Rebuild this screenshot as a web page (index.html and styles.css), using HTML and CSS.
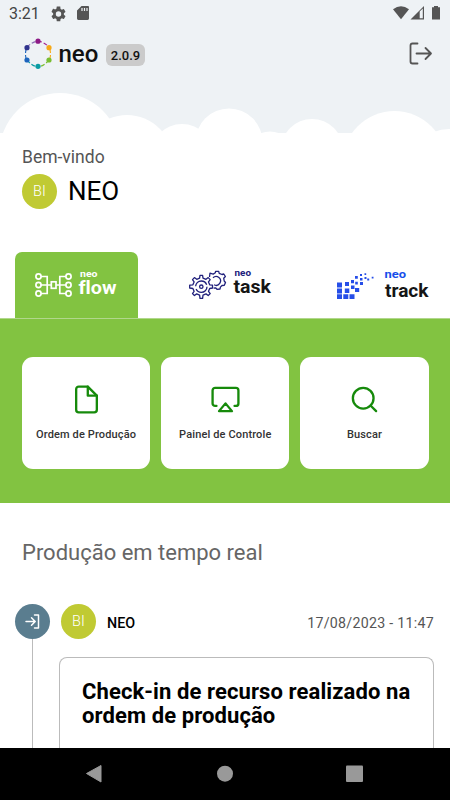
FILE: index.html
```html
<!DOCTYPE html>
<html lang="pt-BR">

<head>
  <meta charset="UTF-8">
  <meta name="viewport" content="width=device-width, initial-scale=1.0">
  <title>neo</title>
  <link rel="stylesheet" href="styles.css">
</head>

<body>
  <div class="screen">
    <header class="top">
      <div class="status">
        <span class="time">3:21</span>
        <svg class="status-gear" width="16" height="16" viewBox="2 2 20 20" fill="#555">
          <path d="M19.14 12.94c.04-.3.06-.61.06-.94s-.02-.64-.07-.94l2.03-1.58a.49.49 0 0 0 .12-.61l-1.92-3.32a.49.49 0 0 0-.59-.22l-2.39.96a7 7 0 0 0-1.62-.94l-.36-2.54A.48.48 0 0 0 13.92 2h-3.84c-.24 0-.43.17-.47.41l-.36 2.54c-.59.24-1.13.57-1.62.94l-2.39-.96a.48.48 0 0 0-.59.22L2.74 8.87a.48.48 0 0 0 .12.61l2.03 1.58a6 6 0 0 0 0 1.88l-2.03 1.58a.49.49 0 0 0-.12.61l1.92 3.32c.12.22.37.29.59.22l2.39-.96c.5.38 1.03.7 1.62.94l.36 2.54c.05.24.24.41.48.41h3.84c.24 0 .44-.17.47-.41l.36-2.54a6.800 6.800 0 0 0 1.62-.94l2.39.96c.22.08.47 0 .59-.22l1.92-3.32a.48.48 0 0 0-.12-.61zM12 15.600a3.600 3.600 0 1 1 0-7.200 3.600 3.600 0 0 1 0 7.200z"/>
        </svg>
        <svg class="status-card" width="12" height="14" viewBox="0 0 12 14">
          <path d="M4.500 0H10.500A1.300 1.300 0 0 1 12 1.400V12.600A1.400 1.400 0 0 1 10.600 14H1.400A1.400 1.400 0 0 1 0 12.600V4.500z" fill="#555"/>
          <path d="M5 2v3M7.500 2v3M10 2v3" stroke="#eef2f5" stroke-width="1.200"/>
        </svg>
        <span class="spacer"></span>
        <svg width="49" height="15" viewBox="0 0 49 15" fill="#555">
          <path d="M0 3.300Q8 -2.600 16 3.300L8 13.200z"/>
          <path d="M17.500 13.500L31 0V13.500z"/>
          <path d="M26.700 5.500L29.800 2.500V12.300H26.700z" fill="#eef2f5"/>
          <path d="M41 1.200V0h4v1.200h2v12.300h-8V1.200z"/>
        </svg>
      </div>
      <div class="brand">
        <svg width="28" height="32" viewBox="0 0 28 32">
          <g fill="none" stroke-width="1.100" stroke-dasharray="4 2">
            <path d="M14 3Q20 4 25 9" stroke="#a3238e"/>
            <path d="M25.800 11Q27.200 16 25.800 21" stroke="#f7a916"/>
            <path d="M25 22Q20 28 14 29" stroke="#79bd31"/>
            <path d="M3 22Q8 28 14 29" stroke="#0a9ca3"/>
            <path d="M2.200 11Q.8 16 2.200 21" stroke="#1c65bd"/>
            <path d="M3 9Q8 4 14 3" stroke="#8b6db5"/>
          </g>
          <circle cx="14" cy="3.200" r="2.600" fill="#8c1a86"/>
          <circle cx="25" cy="9.700" r="2.600" fill="#f7a916"/>
          <circle cx="25" cy="22" r="2.600" fill="#79bd31"/>
          <circle cx="14" cy="28.300" r="2.600" fill="#0a9ca3"/>
          <circle cx="3" cy="22" r="2.600" fill="#1c65bd"/>
          <circle cx="3" cy="9.700" r="2.600" fill="#2f338d"/>
        </svg>
        <span class="brand-name">neo</span>
        <span class="version">2.0.9</span>
        <span class="spacer"></span>
        <svg class="logout" width="24" height="24" viewBox="0 0 24 24" fill="none" stroke="#555" stroke-width="1.800" stroke-linecap="round" stroke-linejoin="round">
          <path d="M8.500 1.500H3.500Q1.500 1.500 1.500 3.500V19.500Q1.500 21.500 3.500 21.500H8.500M7.500 11.500H22M16.500 6l5.500 5.500-5.500 5.500"/>
        </svg>
      </div>
      <svg class="clouds" width="450" height="41" viewBox="0 92 450 41" fill="#fff">
        <circle cx="60" cy="153.600" r="60.600"/>
        <circle cx="127" cy="161" r="46"/>
        <circle cx="182" cy="156" r="32"/>
        <circle cx="229" cy="142" r="33.500"/>
        <circle cx="270" cy="157" r="25.500"/>
        <circle cx="312" cy="150" r="31"/>
        <circle cx="394.500" cy="163" r="52"/>
        <circle cx="449" cy="169" r="40"/>
      </svg>
    </header>

    <section class="welcome">
      <p class="greeting">Bem-vindo</p>
      <div class="user">
        <span class="avatar">BI</span>
        <span class="user-name">NEO</span>
      </div>
    </section>

    <nav class="tabs">
      <a class="tab active">
        <svg width="123" height="66" viewBox="15 252 123 66">
          <g fill="none" stroke="#fff" stroke-width="1.700">
            <circle cx="38.500" cy="276.500" r="2.600"/>
            <circle cx="38.500" cy="285" r="2.600"/>
            <circle cx="38.500" cy="293.500" r="2.600"/>
            <circle cx="68.500" cy="276.500" r="2.600"/>
            <circle cx="68.500" cy="285" r="2.600"/>
            <circle cx="68.500" cy="293.500" r="2.600"/>
            <path d="M41 276.500h6.200v17H41M41 285h10M66 276.500h-6.200v17H66M66 285h-10"/>
            <rect x="51.300" y="281.800" width="4.700" height="6.500"/>
          </g>
          <text class="logo-small" x="80" y="277" textLength="17.500" lengthAdjust="spacingAndGlyphs" fill="#fff">neo</text>
          <text class="logo-big" x="78.500" y="294" textLength="38" lengthAdjust="spacingAndGlyphs" fill="#fff">flow</text>
        </svg>
      </a>
      <a class="tab">
        <svg width="123" height="66" viewBox="169 252 123 66">
          <g fill="none" stroke="#20207c" stroke-width="1.300" stroke-linejoin="round">
            <path d="M199.600 278.100L200 275.300H202.600L203 278.100L206 279.300L208.200 277.600L210.200 279.600L208.500 281.900L209.700 284.800L212.500 285.200V288L209.700 288.500L208.500 291.300L210.200 293.600L208.200 295.500L206 293.900L203 295.100L202.600 298.300H200L199.600 295.100L196.700 293.900L194.400 295.500L192.500 293.600L194.100 291.300L192.900 288.500L189.700 288V285.200L192.900 284.800L194.100 281.900L192.500 279.600L194.400 277.600L196.700 279.300z"/>
            <circle cx="201.300" cy="286.700" r="5.700" stroke-dasharray="15 2.900"/>
            <circle cx="201.300" cy="286.700" r="1.700"/>
            <path d="M209.500 277L210 273.200L213.200 274.100L215.300 272.800L215.600 271.300H218.700L219.200 273.300L222 274.500L223.800 274L225.400 276.500L223.700 278.200L224.200 281L225.500 282.500L224.300 285.300L222 285.500L220.400 287.100L220 289L217 289.300L215.500 287.800L213.500 288.200"/>
            <path d="M213 277.800A4.400 4.400 0 1 1 214 284.800"/>
          </g>
          <text class="logo-small" x="234.500" y="276" textLength="16.500" lengthAdjust="spacingAndGlyphs" fill="#20207c">neo</text>
          <text class="logo-big" x="233.500" y="293" textLength="37.500" lengthAdjust="spacingAndGlyphs" fill="#151515">task</text>
        </svg>
      </a>
      <a class="tab">
        <svg width="123" height="66" viewBox="322 252 123 66">
          <g fill="#264ee8">
            <path d="M337 282.500h5v5h-5zM337 288.500h5v5h-5zM337 294.200h5v4.800h-5zM343.300 294.200h5v4.800h-5zM349.500 294.200h5v4.800h-5zM344.800 288.500h4.500v4.500h-4.500zM345 282h4v4h-4zM351 280h3v3.200h-3zM351 285.500h3.500v3.600h-3.500zM355 288h4.200v4h-4.200zM355 276h2.800v2.800h-2.800zM355.200 281.800h2.600v2.700h-2.600zM360 282h3v3h-3zM360 278h2.500v2.500h-2.500zM360 274h2v2h-2zM364.500 273.200h1.700v1.700h-1.700zM364.500 277h2v2h-2zM367.200 278.500h2v2h-2zM371.700 276.700h1.800v1.800h-1.800z"/>
          </g>
          <text class="logo-small track" x="384.500" y="277.500" textLength="21.500" lengthAdjust="spacingAndGlyphs" fill="#164eea">neo</text>
          <text class="logo-big" x="385" y="297" textLength="43.500" lengthAdjust="spacingAndGlyphs" fill="#151515">track</text>
        </svg>
      </a>
    </nav>

    <section class="actions">
      <a class="action">
        <svg class="icon" viewBox="0 0 24 24">
          <path d="M13 2H6a2 2 0 0 0-2 2v16a2 2 0 0 0 2 2h12a2 2 0 0 0 2-2V9z"/>
          <path d="M13 2v7h7"/>
        </svg>
        <span>Ordem de Produção</span>
      </a>
      <a class="action">
        <svg class="icon" viewBox="0 0 24 24">
          <path d="M5 17H4a2 2 0 0 1-2-2V5a2 2 0 0 1 2-2h16a2 2 0 0 1 2 2v10a2 2 0 0 1-2 2h-1"/>
          <path d="M12 15l5 6H7z"/>
        </svg>
        <span>Painel de Controle</span>
      </a>
      <a class="action">
        <svg class="icon" viewBox="0 0 24 24">
          <circle cx="11" cy="11" r="8"/>
          <path d="M21 21l-4.350-4.350"/>
        </svg>
        <span>Buscar</span>
      </a>
    </section>

    <section class="feed">
      <h2>Produção em tempo real</h2>
      <article class="event">
        <div class="rail">
          <span class="rail-icon">
            <svg width="17" height="17" viewBox="0 0 17 17" fill="none" stroke="#fff" stroke-width="1.500" stroke-linecap="round" stroke-linejoin="round">
              <path d="M10.500 2H14.500V15H10.500M2 8.500H11M7.500 4.800l3.700 3.700-3.700 3.700"/>
            </svg>
          </span>
        </div>
        <div class="event-body">
          <div class="event-head">
            <span class="avatar">BI</span>
            <strong>NEO</strong>
            <time>17/08/2023 - 11:47</time>
          </div>
          <div class="event-card">
            <h3>Check-in de recurso realizado na ordem de produção</h3>
          </div>
        </div>
      </article>
    </section>

    <footer class="navbar">
      <svg width="450" height="52" viewBox="0 748 450 52" fill="#999">
        <path d="M86.500 773.500L101 765.500V782z" stroke="#999" stroke-linejoin="round"/>
        <circle cx="225" cy="773.700" r="8"/>
        <rect x="346" y="765.500" width="17" height="16.500" rx="1"/>
      </svg>
    </footer>
  </div>
</body>

</html>
```
FILE: styles.css
```css
* {
  box-sizing: border-box;
}

body {
  margin: 0;
  background: #fff;
  font-family: Roboto, "Liberation Sans", sans-serif;
}

h2, h3, p {
  margin: 0;
}

svg {
  display: block;
  flex-shrink: 0;
}

.screen {
  display: flex;
  flex-direction: column;
  width: 450px;
  height: 800px;
  overflow: hidden;
}

.spacer {
  flex: 1;
}

/* header */
.top {
  display: flex;
  flex-direction: column;
  height: 133px;
  background: #eef2f5;
}

.status {
  display: flex;
  align-items: center;
  height: 27px;
  padding: 0 8px 0 9px;
}

.time {
  width: 42px;
  color: #444;
  font-size: 16px;
  line-height: 27px;
}

.status-gear {
  width: 15px;
}

.status-card {
  margin: -2px 0 0 11px;
}

.brand {
  display: flex;
  align-items: center;
  height: 54px;
  padding: 0 17px 0 24px;
}

.brand-name {
  width: 48px;
  padding-left: 6.5px;
  color: #111;
  font-size: 24px;
  font-weight: 500;
  line-height: 28px;
}

.version {
  width: 39px;
  height: 22px;
  margin: 2px 0 0 6px;
  border-radius: 6px;
  background: #cbcbcb;
  color: #111;
  font-size: 13px;
  font-weight: 500;
  line-height: 23px;
  text-align: center;
}

.clouds {
  margin-top: auto;
}

/* greeting */
.welcome {
  height: 119px;
  padding: 13px 22px 0;
}

.greeting {
  color: #555;
  font-size: 17.5px;
  line-height: 22px;
}

.user {
  display: flex;
  align-items: center;
  gap: 11px;
  margin-top: 5px;
}

.avatar {
  width: 35px;
  height: 35px;
  border-radius: 50%;
  background: #c0ca33;
  color: #fff;
  font-size: 14.5px;
  font-weight: 300;
  line-height: 35px;
  text-align: center;
}

.user-name {
  color: #000;
  font-size: 26px;
  line-height: 37px;
}

/* product tabs */
.tabs {
  display: flex;
  justify-content: space-between;
  height: 66px;
  padding: 0 5px 0 15px;
}

.tab.active {
  border-radius: 7px 7px 0 0;
  background: #82c341;
}

.logo-small {
  font: 700 9px Roboto, sans-serif;
}

.logo-small.track {
  font-size: 11px;
}

.logo-big {
  font: 700 19px Roboto, sans-serif;
  font-variant-ligatures: none;
}

/* shortcuts */
.actions {
  display: flex;
  gap: 11px;
  height: 185px;
  padding: 37.5px 21.500px 34px 22px;
  border-top: 1px solid #b1d78c;
  background: #82c341;
}

.action {
  display: flex;
  flex: 1;
  flex-direction: column;
  align-items: center;
  gap: 12px;
  height: 112.5px;
  padding-top: 27.5px;
  border-radius: 11px;
  background: #fff;
  color: #333;
  font-size: 11px;
  font-weight: 500;
  letter-spacing: .13px;
  line-height: 16px;
  white-space: nowrap;
}

.icon {
  width: 31px;
  height: 31px;
  fill: none;
  stroke: #168a0b;
  stroke-width: 1.8;
  stroke-linecap: round;
  stroke-linejoin: round;
}

/* live feed */
.feed {
  display: flex;
  flex: 1;
  flex-direction: column;
  min-height: 0;
  padding: 35px 16px 0 15px;
  overflow: hidden;
}

.feed h2 {
  padding-left: 7px;
  color: #666;
  font-size: 22px;
  font-weight: 400;
  line-height: 30px;
}

.event {
  display: flex;
  flex: 1;
  gap: 9px;
  margin-top: 36px;
}

.rail {
  width: 35px;
  background: linear-gradient(#bbb, #bbb) 17px 0 / 1px 100% no-repeat;
}

.rail-icon {
  display: flex;
  align-items: center;
  justify-content: center;
  width: 35px;
  height: 35px;
  border-radius: 50%;
  background: #5a7d8f;
}

.event-body {
  display: flex;
  flex: 1;
  flex-direction: column;
}

.event-head {
  display: flex;
  align-items: center;
  padding-left: 2px;
}

.event-head strong {
  margin-left: 11px;
  padding-top: 2px;
  font-size: 14.3px;
  font-weight: 500;
}

.event-head time {
  margin-left: auto;
  padding-top: 2px;
  color: #555;
  font-size: 14.2px;
  letter-spacing: .28px;
}

.event-card {
  flex: 1;
  margin-top: 18px;
  padding: 21.5px 20px 0 22px;
  border: 1px solid #bbb;
  border-bottom: 0;
  border-radius: 8px 8px 0 0;
}

.event-card h3 {
  color: #000;
  font-size: 22px;
  font-weight: 700;
  letter-spacing: .1px;
  line-height: 24.5px;
}

/* android buttons */
.navbar {
  height: 52px;
  background: #000;
}
```
